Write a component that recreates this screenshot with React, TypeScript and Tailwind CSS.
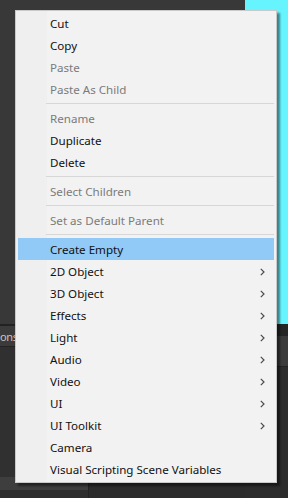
import { JSX } from "react";

type Entry =
  | { kind: "item"; label: string; disabled?: boolean; sub?: boolean; active?: boolean }
  | { kind: "sep" };

const entries: Entry[] = [
  { kind: "item", label: "Cut" },
  { kind: "item", label: "Copy" },
  { kind: "item", label: "Paste", disabled: true },
  { kind: "item", label: "Paste As Child", disabled: true },
  { kind: "sep" },
  { kind: "item", label: "Rename", disabled: true },
  { kind: "item", label: "Duplicate" },
  { kind: "item", label: "Delete" },
  { kind: "sep" },
  { kind: "item", label: "Select Children", disabled: true },
  { kind: "sep" },
  { kind: "item", label: "Set as Default Parent", disabled: true },
  { kind: "sep" },
  { kind: "item", label: "Create Empty", active: true },
  { kind: "item", label: "2D Object", sub: true },
  { kind: "item", label: "3D Object", sub: true },
  { kind: "item", label: "Effects", sub: true },
  { kind: "item", label: "Light", sub: true },
  { kind: "item", label: "Audio", sub: true },
  { kind: "item", label: "Video", sub: true },
  { kind: "item", label: "UI", sub: true },
  { kind: "item", label: "UI Toolkit", sub: true },
  { kind: "item", label: "Camera" },
  { kind: "item", label: "Visual Scripting Scene Variables" },
];

function Chevron() {
  return (
    <svg width="5" height="8" viewBox="0 0 5 8" fill="none">
      <path d="M0.8 0.8 L4 4 L0.8 7.2" stroke="#4a4a4a" strokeWidth="1.2" />
    </svg>
  );
}

function MenuRow({ label, disabled, sub, active }: { label: string; disabled?: boolean; sub?: boolean; active?: boolean }) {
  return (
    <div
      className={`h-[22px] flex items-center justify-between pl-[32px] pr-[9px] ${active ? "bg-[#91c9f7]" : ""} ${disabled ? "text-[#7b7b7b]" : "text-[#111111]"}`}
    >
      <span className="pt-[1px] leading-[16px]">{label}</span>
      {sub && (
        <span className="pt-[2px]">
          <Chevron />
        </span>
      )}
    </div>
  );
}

export default function App(): JSX.Element {
  return (
    <div className="relative w-[288px] h-[498px] overflow-hidden bg-[#383838] font-['Noto_Sans',sans-serif] text-[11.6px]">
      <div className="flex flex-col h-full">
        <div className="flex h-[324px]">
          <div className="flex-1 bg-[#383838]" />
          <div className="w-[43px] bg-[#66f5ff]" />
        </div>
        <div className="flex flex-1">
          <div className="w-[245px] flex flex-col">
            <div className="h-[2px] bg-[#222222]" />
            <div className="h-[20px] bg-[#3b3b3b] flex items-center text-[#c4c4c4] text-[11px] leading-none">
              <span className="pt-[1px] tracking-[-0.3px]">ons</span>
            </div>
            <div className="h-[1px] bg-[#232323]" />
            <div className="flex-1 bg-[#303030]" />
            <div className="flex h-[13px]">
              <div className="w-[88px] bg-[#3e3e3e]" />
              <div className="w-[1px] bg-[#222222]" />
              <div className="flex-1 bg-[#2b2b2b]" />
            </div>
            <div className="flex h-[8px]">
              <div className="w-[88px] bg-[#2d2d2d]" />
              <div className="w-[1px] bg-[#222222]" />
              <div className="flex-1 bg-[#2b2b2b]" />
            </div>
          </div>
          <div className="flex-1 flex flex-col">
            <div className="h-[12px] bg-[#252525]" />
            <div className="h-[30px] bg-[#3b3b3b]" />
            <div className="h-[1px] bg-[#222222]" />
            <div className="flex-1 bg-[#2c2c2c]" />
          </div>
        </div>
      </div>

      <div className="absolute left-[15px] top-[10px] w-[262px] border border-[#c9c9c9] bg-[linear-gradient(to_right,#efefef_31px,#f2f2f2_31px)] pt-[1px] pb-[2px] px-[2px] shadow-[3px_3px_2px_rgba(0,0,0,0.45)]">
        {entries.map((e, i) =>
          e.kind === "sep" ? (
            <div key={i} className="h-[7px] flex items-center pl-[28px]">
              <div className="h-[1px] w-full bg-[#d7d7d7]" />
            </div>
          ) : (
            <MenuRow key={i} label={e.label} disabled={e.disabled} sub={e.sub} active={e.active} />
          )
        )}
      </div>
    </div>
  );
}
